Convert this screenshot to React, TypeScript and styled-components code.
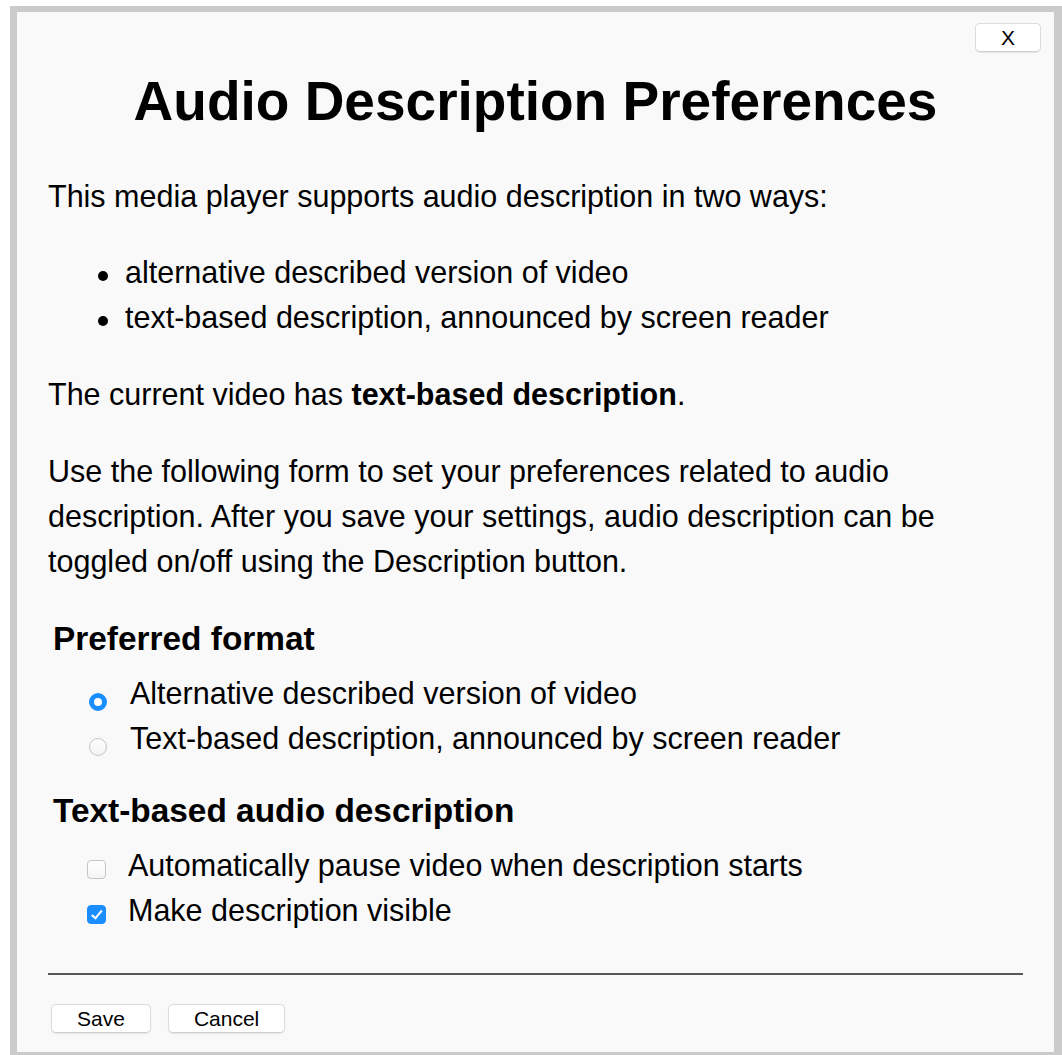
import React from "react";
import styled, { createGlobalStyle } from "styled-components";

const GlobalStyle = createGlobalStyle`
  html, body {
    margin: 0;
    padding: 0;
    background: #ffffff;
    overflow: hidden;
  }
  body {
    font-family: "Liberation Sans", Arial, Helvetica, sans-serif;
    color: #000;
  }
`;

const Dialog = styled.div`
  box-sizing: border-box;
  margin: 6px 0 0 10px;
  width: 1052px;
  height: 1052px;
  background: #f9f9f9;
  border: 6px solid #cbcbcb;
  border-left-width: 7px;
  border-right-width: 8px;
  display: flex;
  flex-direction: column;
`;

const TopBar = styled.div`
  display: flex;
  justify-content: flex-end;
  padding: 11px 13px 0;
`;

const Button = styled.button`
  box-sizing: border-box;
  height: 29px;
  padding: 0 25px;
  margin: 0;
  font-family: "Liberation Sans", Arial, Helvetica, sans-serif;
  font-size: 21px;
  line-height: 27px;
  color: #000;
  background: #ffffff;
  border: 1px solid #dcdcdc;
  border-bottom-color: #cfcfcf;
  border-radius: 5px;
  box-shadow: 0 1px 1px rgba(0, 0, 0, 0.08);
  cursor: pointer;
`;

const Title = styled.h1`
  margin: 17px 0 0;
  font-size: 55px;
  line-height: 64px;
  font-weight: bold;
  text-align: center;
`;

const Content = styled.div`
  padding: 0 31px;
`;

const Paragraph = styled.p<{ $top: number }>`
  margin: ${(p) => p.$top}px 0 0;
  font-size: 30.5px;
  line-height: 45px;
`;

const List = styled.ul`
  list-style: none;
  margin: 31px 0 0;
  padding: 0;
`;

const ListItem = styled.li`
  display: flex;
  align-items: flex-start;
  font-size: 30.5px;
  line-height: 45px;
`;

const Dot = styled.span`
  flex: none;
  width: 10px;
  height: 10px;
  border-radius: 50%;
  background: #000;
  margin: 21px 17px 0 50px;
`;

const Fieldset = styled.fieldset<{ $top: number }>`
  border: 0;
  margin: ${(p) => p.$top}px 0 0 5px;
  padding: 0;
  min-width: 0;
`;

const Legend = styled.legend`
  padding: 0;
  font-size: 33.4px;
  line-height: 40px;
  font-weight: bold;
`;

const Options = styled.div`
  margin-top: 12.5px;
  display: flex;
  flex-direction: column;
`;

const OptionRow = styled.label`
  display: flex;
  align-items: flex-start;
  height: 45px;
  font-size: 30.5px;
  line-height: 45px;
  cursor: pointer;
`;

const Radio = styled.input.attrs({ type: "radio" })`
  appearance: none;
  -webkit-appearance: none;
  flex: none;
  box-sizing: border-box;
  width: 18px;
  height: 18px;
  margin: 22px 23px 0 36px;
  border-radius: 50%;
  background: linear-gradient(#ffffff, #f3f3f3);
  border: 1px solid #c4c4c4;

  &:checked {
    background: #ffffff;
    border: 5.5px solid #1a8dff;
  }
`;

const Checkbox = styled.input.attrs({ type: "checkbox" })`
  appearance: none;
  -webkit-appearance: none;
  position: relative;
  flex: none;
  box-sizing: border-box;
  width: 19px;
  height: 19px;
  margin: 17px 22px 0 34px;
  border-radius: 4px;
  background: linear-gradient(#ffffff, #f5f5f5);
  border: 1px solid #c4c4c4;

  &:checked {
    background: #1a8dff;
    border-color: #1a8dff;
  }

  &:checked::after {
    content: "";
    position: absolute;
    left: 5.5px;
    top: 2px;
    width: 4px;
    height: 8.5px;
    border-right: 2.5px solid #fff;
    border-bottom: 2.5px solid #fff;
    transform: rotate(40deg);
  }
`;

const Divider = styled.hr`
  margin: 40px 0 0;
  border: 0;
  border-top: 2px solid #585858;
  height: 0;
`;

const ButtonRow = styled.div`
  display: flex;
  gap: 17px;
  margin-top: 29px;
  padding-left: 3px;
`;

export default function App() {
  return (
    <>
      <GlobalStyle />
      <Dialog role="dialog" aria-labelledby="ad-prefs-title">
        <TopBar>
          <Button aria-label="Close">X</Button>
        </TopBar>
        <Title id="ad-prefs-title">Audio Description Preferences</Title>
        <Content>
          <Paragraph $top={41}>
            This media player supports audio description in two ways:
          </Paragraph>
          <List>
            <ListItem>
              <Dot />
              alternative described version of video
            </ListItem>
            <ListItem>
              <Dot />
              text-based description, announced by screen reader
            </ListItem>
          </List>
          <Paragraph $top={32}>
            The current video has <strong>text-based description</strong>.
          </Paragraph>
          <Paragraph $top={32}>
            Use the following form to set your preferences related to audio
            description. After you save your settings, audio description can
            be toggled on/off using the Description button.
          </Paragraph>

          <Fieldset $top={34.5}>
            <Legend>Preferred format</Legend>
            <Options>
              <OptionRow>
                <Radio name="format" defaultChecked />
                Alternative described version of video
              </OptionRow>
              <OptionRow>
                <Radio name="format" />
                Text-based description, announced by screen reader
              </OptionRow>
            </Options>
          </Fieldset>

          <Fieldset $top={29.5}>
            <Legend>Text-based audio description</Legend>
            <Options>
              <OptionRow>
                <Checkbox />
                Automatically pause video when description starts
              </OptionRow>
              <OptionRow>
                <Checkbox defaultChecked />
                Make description visible
              </OptionRow>
            </Options>
          </Fieldset>

          <Divider />
          <ButtonRow>
            <Button>Save</Button>
            <Button>Cancel</Button>
          </ButtonRow>
        </Content>
      </Dialog>
    </>
  );
}
